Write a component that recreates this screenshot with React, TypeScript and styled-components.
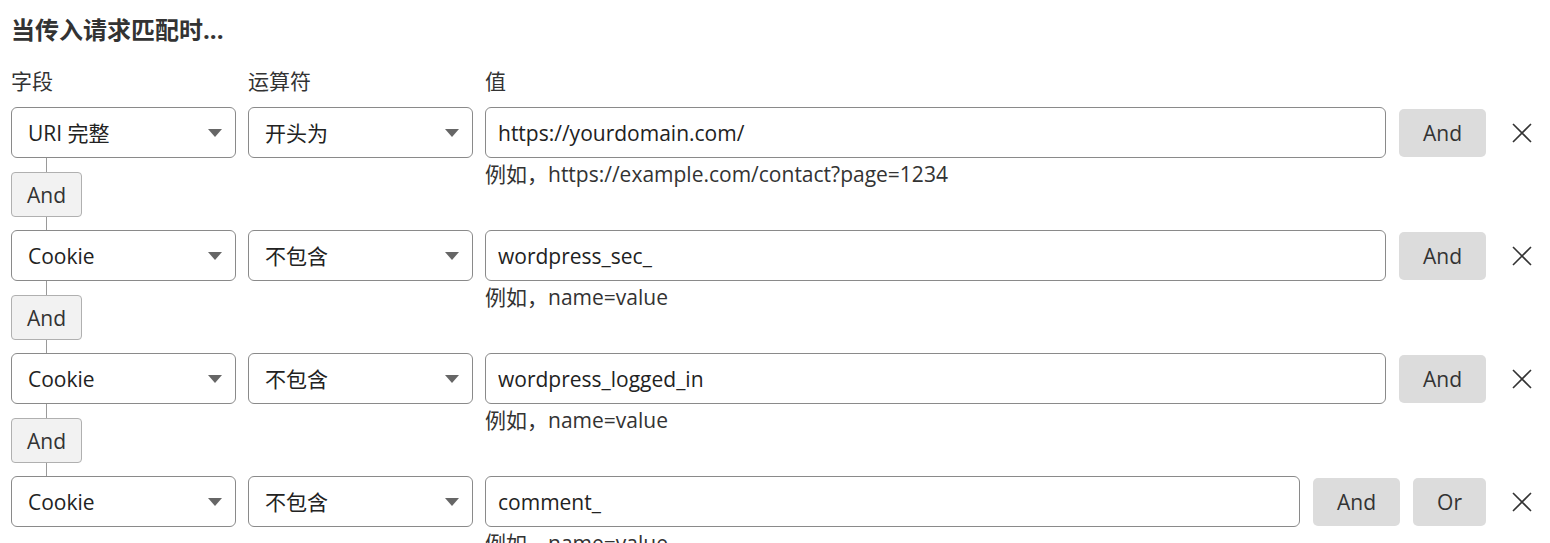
import styled, { createGlobalStyle } from "styled-components";

const GlobalStyle = createGlobalStyle`
    html, body {
        margin: 0;
        padding: 0;
        background: #ffffff;
    }
    body {
        font-family: "Open Sans", "Noto Sans CJK SC", sans-serif;
        color: #333333;
    }
`;

const Page = styled.main`
    padding: 14px 4px 0 11px;
`;

const Title = styled.h2`
    margin: 0;
    font-size: 24px;
    line-height: 32px;
    font-weight: 700;
    color: #333333;
`;

const RuleGrid = styled.div`
    display: grid;
    grid-template-columns: 225px 225px 1fr auto 48px;
    column-gap: 12px;
`;

const HeaderRow = styled(RuleGrid)`
    margin-top: 21px;
    margin-bottom: 12px;
`;

const Label = styled.span`
    font-size: 21px;
    line-height: 28px;
    color: #333333;
`;

const SelectWrap = styled.div`
    position: relative;
    height: 51px;

    &::after {
        content: "";
        position: absolute;
        right: 14px;
        top: 22px;
        border-left: 7px solid transparent;
        border-right: 7px solid transparent;
        border-top: 8px solid #666666;
        pointer-events: none;
    }
`;

const Select = styled.select`
    appearance: none;
    width: 100%;
    height: 100%;
    box-sizing: border-box;
    border: 1px solid #8a8a8a;
    border-radius: 6px;
    background: #ffffff;
    padding: 0 36px 0 16px;
    font-family: inherit;
    font-size: 21px;
    color: #222222;
`;

const TextInput = styled.input`
    width: 100%;
    height: 51px;
    box-sizing: border-box;
    border: 1px solid #8a8a8a;
    border-radius: 6px;
    padding: 0 12px;
    font-family: inherit;
    font-size: 21px;
    color: #222222;
`;

const Actions = styled.div`
    display: flex;
    gap: 13px;
    align-items: center;
    margin-left: 1px;
`;

const LogicButton = styled.button`
    height: 48px;
    padding: 0 24px;
    border: none;
    border-radius: 5px;
    background: #dcdcdc;
    font-family: inherit;
    font-size: 21px;
    color: #333333;
`;

const RemoveButton = styled.button`
    display: flex;
    align-items: center;
    justify-content: center;
    height: 51px;
    padding: 0;
    border: none;
    background: transparent;
    color: #333333;
`;

const Connector = styled.div`
    display: flex;
    flex-direction: column;
    align-items: center;
    width: 71px;
    height: 72px;
`;

const Line = styled.div<{ $h?: number }>`
    width: 1px;
    background: #9a9a9a;
    height: ${(p) => (p.$h ? `${p.$h}px` : "auto")};
    flex: ${(p) => (p.$h ? "none" : "1")};
`;

const JoinButton = styled.button`
    width: 71px;
    height: 45px;
    box-sizing: border-box;
    border: 1px solid #b0b0b0;
    border-radius: 4px;
    background: #f2f2f2;
    font-family: inherit;
    font-size: 21px;
    color: #333333;
`;

const Hint = styled.div`
    grid-column: 3;
    margin-top: 3px;
    font-size: 21px;
    line-height: 26px;
    color: #333333;
`;

type Rule = {
    field: string;
    op: string;
    value: string;
    hint: string;
};

const rules: Rule[] = [
    { field: "URI 完整", op: "开头为", value: "https://yourdomain.com/", hint: "例如，https://example.com/contact?page=1234" },
    { field: "Cookie", op: "不包含", value: "wordpress_sec_", hint: "例如，name=value" },
    { field: "Cookie", op: "不包含", value: "wordpress_logged_in", hint: "例如，name=value" },
    { field: "Cookie", op: "不包含", value: "comment_", hint: "例如，name=value" },
];

function CloseIcon() {
    return (
        <svg width="22" height="22" viewBox="0 0 22 22" fill="none" stroke="#333" strokeWidth="1.6">
            <path d="M2 2 L20 20 M20 2 L2 20" />
        </svg>
    );
}

export default function App() {
    return (
        <Page>
            <GlobalStyle />
            <Title>当传入请求匹配时...</Title>
            <HeaderRow>
                <Label>字段</Label>
                <Label>运算符</Label>
                <Label>值</Label>
            </HeaderRow>
            {rules.map((rule, i) => {
                const last = i === rules.length - 1;
                return (
                    <RuleGrid key={i}>
                        <SelectWrap>
                            <Select defaultValue={rule.field}>
                                <option>{rule.field}</option>
                            </Select>
                        </SelectWrap>
                        <SelectWrap>
                            <Select defaultValue={rule.op}>
                                <option>{rule.op}</option>
                            </Select>
                        </SelectWrap>
                        <TextInput defaultValue={rule.value} />
                        <Actions>
                            <LogicButton>And</LogicButton>
                            {last && <LogicButton>Or</LogicButton>}
                        </Actions>
                        <RemoveButton aria-label="删除">
                            <CloseIcon />
                        </RemoveButton>
                        {!last && (
                            <Connector>
                                <Line $h={14} />
                                <JoinButton>And</JoinButton>
                                <Line />
                            </Connector>
                        )}
                        <Hint>{rule.hint}</Hint>
                    </RuleGrid>
                );
            })}
        </Page>
    );
}
